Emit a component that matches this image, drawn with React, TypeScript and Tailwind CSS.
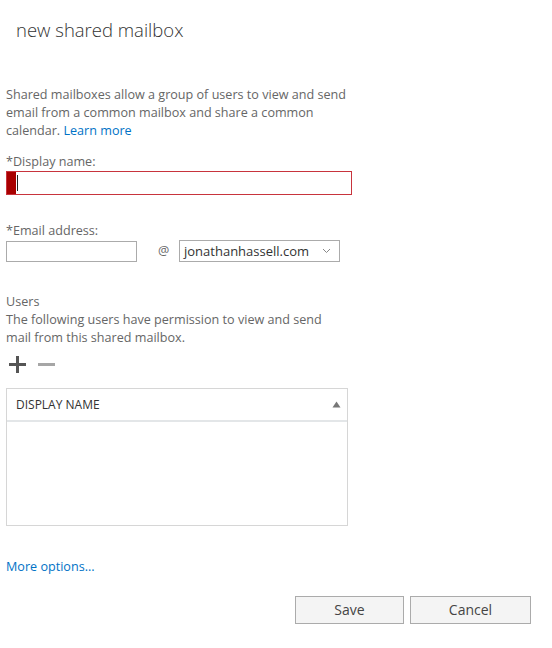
import { useState } from 'react';

const App = () => {
  const [displayName, setDisplayName] = useState('');
  const [alias, setAlias] = useState('');

  return (
    <div
      className="w-[552px] h-[648px] bg-white text-[#666] text-[12.6px] leading-[18px]"
      style={{ fontFamily: '"Open Sans", "Noto Sans", sans-serif' }}
    >
      <h1 className="pl-[16px] pt-[17px] text-[18.5px] leading-[26px] font-light text-[#333]">
        new shared mailbox
      </h1>

      <div className="px-[6px] pt-[43px]">
        <p className="w-[346px]">
          Shared mailboxes allow a group of users to view and send email from a common mailbox and share a
          common calendar. <a className="text-[#0072c6]">Learn more</a>
        </p>

        {/* display name */}
        <div className="mt-[13px]">*Display name:</div>
        <div className="mt-0 flex items-center w-[346px] h-[24px] border border-[#c8343d] bg-white">
          <div className="w-[9px] self-stretch bg-[#a80000]" />
          {/* caret, since the field shows focused */}
          <div className="ml-[1px] w-[1px] h-[16px] bg-[#222]" />
          <input
            className="flex-1 px-[1px] outline-none text-[13px] text-[#333] caret-transparent"
            value={displayName}
            onChange={(e) => setDisplayName(e.target.value)}
          />
        </div>

        {/* email */}
        <div className="mt-[27px]">*Email address:</div>
        <div className="mt-0 flex items-center">
          <input
            className="w-[131px] h-[21px] border border-[#ababab] outline-none px-1 text-[#333]"
            value={alias}
            onChange={(e) => setAlias(e.target.value)}
          />
          <span className="ml-[21px] w-[21px] text-[#666]">@</span>
          <div className="w-[161px] h-[22px] border border-[#ababab] flex items-center justify-between pl-[4px] pr-[8px] text-[#333]">
            <span className="text-[13px]">jonathanhassell.com</span>
            <svg width="9" height="6" viewBox="0 0 9 6" fill="none">
              <path d="M1 1l3.5 3.5L8 1" stroke="#888" strokeWidth="1" />
            </svg>
          </div>
        </div>

        {/* users */}
        <div className="mt-[31px]">Users</div>
        <p className="w-[330px]">
          The following users have permission to view and send mail from this shared mailbox.
        </p>
        <div className="mt-[8px] flex items-center gap-[11px] pl-[2px] h-[18px]">
          <svg width="19" height="19" viewBox="0 0 19 19">
            <rect x="8" y="1" width="3" height="17" fill="#555" />
            <rect x="1" y="8" width="17" height="3" fill="#555" />
          </svg>
          <svg width="17" height="19" viewBox="0 0 17 19">
            <rect x="0" y="8" width="17" height="3" fill="#a6a6a6" />
          </svg>
        </div>

        <div className="mt-[15px] w-[342px] h-[138px] border border-[#d6d6d6] flex flex-col">
          <div className="h-[33px] border-b-2 border-[#e3e6e8] flex items-center justify-between pl-[9px] pr-[6px] text-[#333] text-[12px]">
            <span>DISPLAY NAME</span>
            <svg width="9" height="7" viewBox="0 0 9 7">
              <path d="M4.5 0.5L8.5 6.5H0.5Z" fill="#777" />
            </svg>
          </div>
          <div className="flex-1" />
        </div>

        <a className="block mt-[32px] text-[#0072c6]">More options...</a>
      </div>

      <div className="mt-[20px] flex justify-end gap-[6px] pr-[21px]">
        <button className="w-[109px] h-[28px] border border-[#ababab] bg-[#f4f4f4] text-[#444] text-[14px]">
          Save
        </button>
        <button className="w-[121px] h-[28px] border border-[#ababab] bg-[#f4f4f4] text-[#444] text-[14px]">
          Cancel
        </button>
      </div>
    </div>
  );
};

export default App;
